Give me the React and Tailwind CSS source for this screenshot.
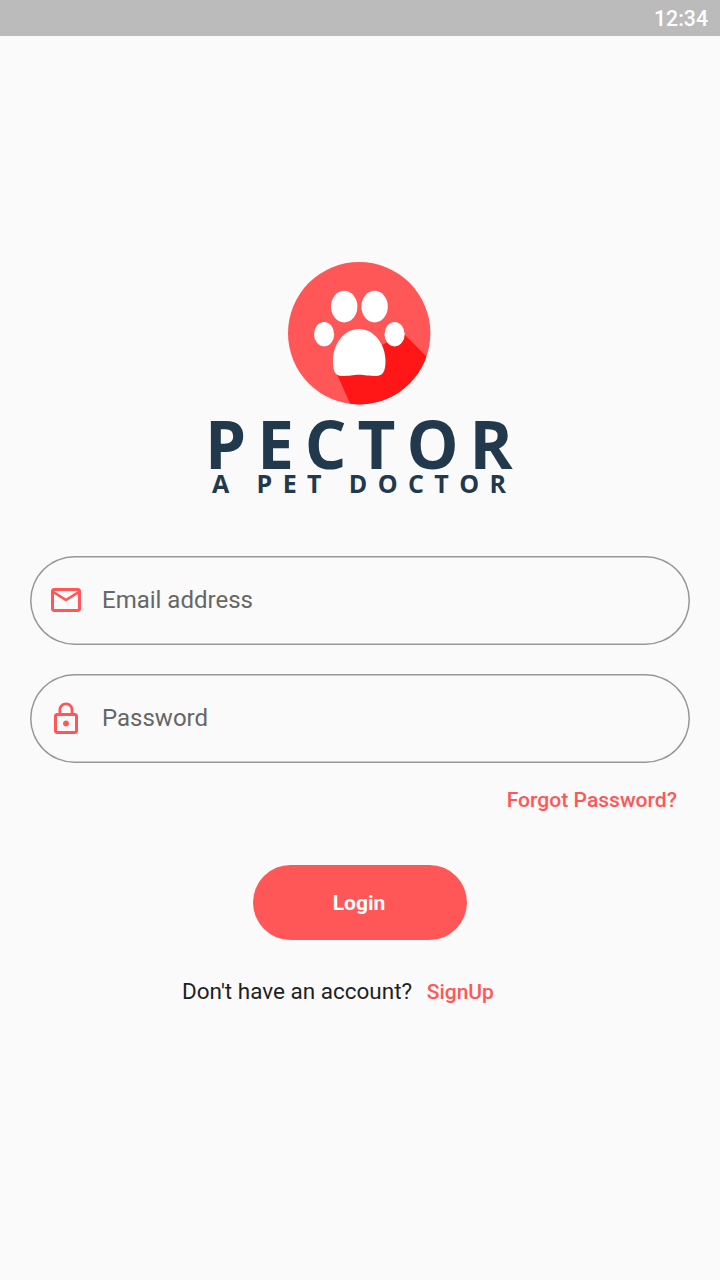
import { MdMailOutline, MdLockOutline } from "react-icons/md";

function Logo() {
  return (
    <div className="flex w-[310px] flex-col items-start self-center">
      <svg className="ml-[82px] h-[144px] w-[144px]" viewBox="287 261 144 144" role="img" aria-label="Pector">
        <defs>
          <clipPath id="disc">
            <circle cx="359.2" cy="333.2" r="71.2" />
          </clipPath>
        </defs>
        <circle cx="359.2" cy="333.2" r="71.2" fill="#ff5757" />
        <path clipPath="url(#disc)" d="M404 334L432 362V410H353L336 372L360 350L382 345Z" fill="#ff1616" />
        <g fill="#fff">
          <ellipse cx="344.2" cy="306.6" rx="13.2" ry="15.8" />
          <ellipse cx="374.6" cy="306.6" rx="13.2" ry="15.8" />
          <ellipse cx="324.1" cy="334.2" rx="10.1" ry="12.2" />
          <ellipse cx="394.6" cy="334.2" rx="10.1" ry="12.2" />
          <path d="M359 329C344 329 333 344 333 361C333 371 335 376 342 376C349 376 353 374.7 359 374.7C365 374.7 369 376 376 376C383 376 385.500 371 385.500 361C385.500 344 374 329 359 329Z" />
        </g>
      </svg>
      <div className="mt-[14px] h-[49px] whitespace-nowrap font-['Open_Sans',sans-serif] text-[65.5px] leading-[49px] font-bold tracking-[11px] text-[#22384d]">
        PECTOR
      </div>
      <div className="ml-[7px] mt-[4px] h-[22px] whitespace-nowrap font-['Open_Sans',sans-serif] text-[25px] leading-[22px] font-bold tracking-[10.4px] text-[#22384d]">
        A PET DOCTOR
      </div>
    </div>
  );
}

function Field({ icon: Icon, label, type }) {
  return (
    <label className="flex h-[88.5px] items-center rounded-full pl-[18px] shadow-[inset_0_0_0_1.5px_#979797]">
      <Icon className="size-9 shrink-0 text-[#ff5757]" />
      <input
        type={type}
        placeholder={label}
        className="ml-[18px] w-full bg-transparent pb-px text-2xl outline-none placeholder:text-[#666666]"
      />
    </label>
  );
}

export default function App() {
  return (
    <div className="flex h-[1280px] w-[720px] flex-col bg-[#fafafa] font-[Roboto,sans-serif]">
      <header className="flex h-9 items-center justify-end bg-[#bbbbbb] pt-px pr-3 text-[21.3px] font-medium text-white">
        12:34
      </header>
      <main className="flex flex-col px-[30px] pt-[225px]">
        <Logo />
        <form className="mt-[62px] flex flex-col">
          <Field icon={MdMailOutline} label="Email address" type="email" />
          <div className="h-[29.8px]" />
          <Field icon={MdLockOutline} label="Password" type="password" />
          <button type="button" className="mt-[22.2px] mr-[13px] h-[30px] self-end text-[21.1px] leading-[30px] font-medium text-[#ff5757]">
            Forgot Password?
          </button>
          <button type="button" className="mt-[50px] h-[75px] w-[214px] self-center rounded-full bg-[#ff5757] pt-[2px] pr-[2px] text-[21px] font-bold text-white">
            Login
          </button>
        </form>
        <div className="mt-[37px] ml-[152px] flex h-[30px] items-center whitespace-nowrap text-[#1f1f1f]">
          <span className="pb-[2px] text-[22.5px] leading-[30px]">Don't have an account?</span>
          <button type="button" className="ml-[14.5px] text-[21px] leading-[30px] font-medium text-[#ff5757]">
            SignUp
          </button>
        </div>
      </main>
    </div>
  );
}
